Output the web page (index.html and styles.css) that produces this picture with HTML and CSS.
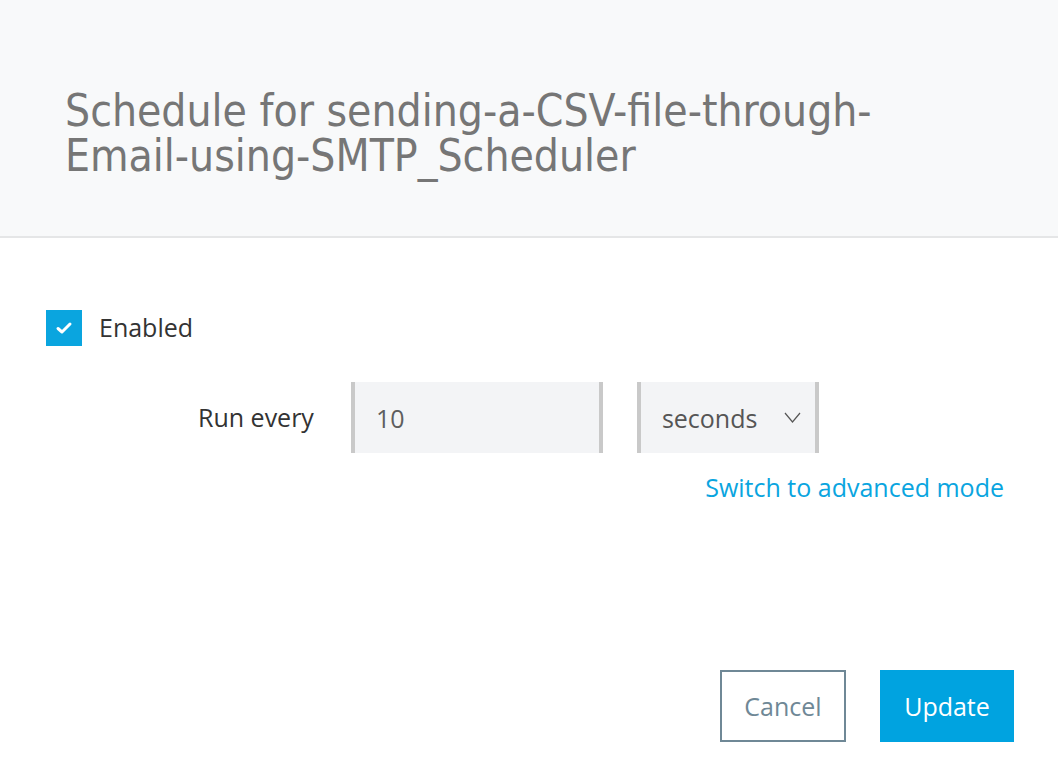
FILE: index.html
```html
<!DOCTYPE html>
<html>
<head>
<meta charset="utf-8">
<link rel="stylesheet" href="styles.css">
</head>
<body>
<div class="dialog">
  <header class="head">
    <h1 class="title"><span class="title-line">Schedule for sending-a-CSV-file-through-</span><span class="title-line">Email-using-SMTP_Scheduler</span></h1>
  </header>
  <main class="body">
    <label class="check-row">
      <span class="checkbox">
        <svg width="18" height="14" viewBox="0 0 18 14"><path d="M3 7.5 L7 11 L15 3" fill="none" stroke="#fff" stroke-width="3" stroke-linecap="round" stroke-linejoin="round"/></svg>
      </span>
      <span class="check-label">Enabled</span>
    </label>
    <div class="run-row">
      <span class="run-label">Run every</span>
      <div class="field num">10</div>
      <div class="field select">
        <span>seconds</span>
        <svg width="17" height="11" viewBox="0 0 17 11"><path d="M1 1 L8.5 10 L16 1" fill="none" stroke="#555" stroke-width="1.2"/></svg>
      </div>
    </div>
    <div class="link-row"><a class="adv-link">Switch to advanced mode</a></div>
  </main>
  <footer class="foot">
    <button class="btn cancel">Cancel</button>
    <button class="btn update">Update</button>
  </footer>
</div>
</body>
</html>
```

FILE: styles.css
```css
* { box-sizing: border-box; }
html, body { margin: 0; padding: 0; background: #fff; }
body { font-family: "Open Sans", "Liberation Sans", sans-serif; color: #333; width: 1058px; height: 772px; overflow: hidden; }
.dialog { display: flex; flex-direction: column; height: 772px; }
.head {
  background: #f8f9fa;
  height: 238px;
  border-bottom: 2px solid #e5e6e7;
  padding: 88px 0 0 65px;
}
.title {
  margin: 0;
  font-family: "DejaVu Sans Condensed", "DejaVu Sans", sans-serif;
  font-weight: 400;
  font-size: 44px;
  line-height: 45px;
  color: #767676;
  white-space: nowrap;
  display: flex;
  flex-direction: column;
}
.title-line { display: block; height: 45px; }
.body { padding: 72px 54px 0 46px; flex: 1; }
.check-row { display: flex; align-items: center; gap: 17px; }
.checkbox { width: 36px; height: 36px; background: #0aa5df; display: flex; align-items: center; justify-content: center; }
.check-label { font-size: 25px; color: #333; margin-top: -3px; }
.run-row { display: flex; align-items: center; margin-top: 36px; padding-left: 152px; }
.run-label { font-size: 25px; color: #333; margin-right: 37px; margin-top: -2px; }
.field {
  height: 71px;
  background: #f3f4f6;
  border-left: 4px solid #c9c9c9;
  border-right: 4px solid #c9c9c9;
  font-size: 25px;
  color: #555;
  display: flex; align-items: center;
}
.num { width: 252px; padding-left: 21px; color: #5e5e5e; }
.select { width: 182px; margin-left: 34px; padding: 0 14px 0 21px; justify-content: space-between; }
.link-row { display: flex; justify-content: flex-end; margin-top: 17px; }
.adv-link { font-size: 25px; color: #0aa5df; cursor: pointer; }
.foot { display: flex; justify-content: flex-end; gap: 34px; padding: 0 44px 30px 0; }
.btn { height: 72px; font-family: "Open Sans", sans-serif; font-size: 25px; border-radius: 0; padding: 0; }
.cancel { width: 126px; background: #fff; border: 2px solid #6f8896; color: #6f8896; }
.update { width: 134px; background: #00a3e0; border: none; color: #fff; }
```
